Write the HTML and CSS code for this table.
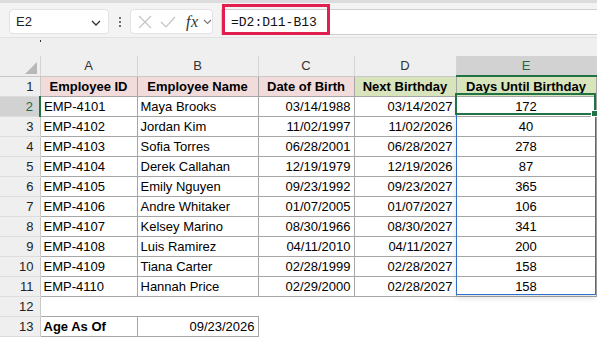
FILE: index.html
```html
<!DOCTYPE html>
<html>
<head>
<meta charset="utf-8">
<link rel="stylesheet" href="styles.css">
</head>
<body>
<div class="topstrip"></div>
<div class="fbar">
  <div class="namebox"><span class="nb-text">E2</span>
    <svg class="chev" width="10" height="6" viewBox="0 0 10 6"><path d="M1 1 L5 5 L9 1" fill="none" stroke="#333" stroke-width="1.3"/></svg>
  </div>
  <div class="dots"><span></span><span></span><span></span></div>
  <div class="fxbox">
    <svg width="14" height="14" viewBox="0 0 14 14"><path d="M1 1 L13 13 M13 1 L1 13" stroke="#c4c4c4" stroke-width="1.2"/></svg>
    <svg width="16" height="14" viewBox="0 0 16 14"><path d="M1 7 L6 12 L15 2" fill="none" stroke="#c4c4c4" stroke-width="1.2"/></svg>
    <span class="fx">fx</span>
    <svg width="9" height="6" viewBox="0 0 9 6"><path d="M1 1 L4.5 4.5 L8 1" fill="none" stroke="#777" stroke-width="1.1"/></svg>
  </div>
  <div class="finput"><span class="ftext">=D2:D11-B13</span></div>
  <div class="redbox"></div>
</div>
<div class="band"><span class="tick"></span></div>
<div class="gridwrap">
<table class="grid">
  <colgroup><col class="c0"><col class="ca"><col class="cb"><col class="cc"><col class="cd"><col class="ce"><col></colgroup>
  <tr class="colhead">
    <th class="corner"><svg width="12" height="12" viewBox="0 0 12 12"><path d="M12 0 L12 12 L0 12 Z" fill="#b8b8b8"/></svg></th>
    <th>A</th><th>B</th><th>C</th><th>D</th><th class="selcol">E</th><th class="fill"></th>
  </tr>
  <tr>
    <th class="rh">1</th>
    <td class="h pink">Employee ID</td><td class="h pink">Employee Name</td><td class="h pink">Date of Birth</td><td class="h green">Next Birthday</td><td class="h green">Days Until Birthday</td><td class="blank"></td>
  </tr>
  <tr><th class="rh selrow">2</th><td class="b">EMP-4101</td><td class="b">Maya Brooks</td><td class="b r">03/14/1988</td><td class="b r">03/14/2027</td><td class="b c">172</td><td class="blank"></td></tr>
  <tr><th class="rh">3</th><td class="b">EMP-4102</td><td class="b">Jordan Kim</td><td class="b r">11/02/1997</td><td class="b r">11/02/2026</td><td class="b c">40</td><td class="blank"></td></tr>
  <tr><th class="rh">4</th><td class="b">EMP-4103</td><td class="b">Sofia Torres</td><td class="b r">06/28/2001</td><td class="b r">06/28/2027</td><td class="b c">278</td><td class="blank"></td></tr>
  <tr><th class="rh">5</th><td class="b">EMP-4104</td><td class="b">Derek Callahan</td><td class="b r">12/19/1979</td><td class="b r">12/19/2026</td><td class="b c">87</td><td class="blank"></td></tr>
  <tr><th class="rh">6</th><td class="b">EMP-4105</td><td class="b">Emily Nguyen</td><td class="b r">09/23/1992</td><td class="b r">09/23/2027</td><td class="b c">365</td><td class="blank"></td></tr>
  <tr><th class="rh">7</th><td class="b">EMP-4106</td><td class="b">Andre Whitaker</td><td class="b r">01/07/2005</td><td class="b r">01/07/2027</td><td class="b c">106</td><td class="blank"></td></tr>
  <tr><th class="rh">8</th><td class="b">EMP-4107</td><td class="b">Kelsey Marino</td><td class="b r">08/30/1966</td><td class="b r">08/30/2027</td><td class="b c">341</td><td class="blank"></td></tr>
  <tr><th class="rh">9</th><td class="b">EMP-4108</td><td class="b">Luis Ramirez</td><td class="b r">04/11/2010</td><td class="b r">04/11/2027</td><td class="b c">200</td><td class="blank"></td></tr>
  <tr><th class="rh">10</th><td class="b">EMP-4109</td><td class="b">Tiana Carter</td><td class="b r">02/28/1999</td><td class="b r">02/28/2027</td><td class="b c">158</td><td class="blank"></td></tr>
  <tr><th class="rh">11</th><td class="b">EMP-4110</td><td class="b">Hannah Price</td><td class="b r">02/29/2000</td><td class="b r">02/28/2027</td><td class="b c">158</td><td class="blank"></td></tr>
  <tr><th class="rh">12</th><td class="blank"></td><td class="blank"></td><td class="blank"></td><td class="blank"></td><td class="blank"></td><td class="blank"></td></tr>
  <tr><th class="rh">13</th><td class="b bold">Age As Of</td><td class="b r">09/23/2026</td><td class="blank"></td><td class="blank"></td><td class="blank"></td><td class="blank"></td></tr>
  <tr><th class="rh"></th><td class="blank"></td><td class="blank"></td><td class="blank"></td><td class="blank"></td><td class="blank"></td><td class="blank"></td></tr>
</table>
<div class="spill"></div>
<div class="active"><span class="handle"></span></div>
</div>
</body>
</html>
```
FILE: styles.css
```css
html, body { margin: 0; padding: 0; }
body {
  width: 597px; height: 337px; overflow: hidden;
  background: #f0f0f0;
  font-family: "Liberation Sans", Arial, sans-serif;
  color: #000;
}
.topstrip { height: 3px; background: #dcdcdc; }
.fbar {
  position: relative;
  height: 35px;
  display: flex;
  align-items: flex-start;
  padding-top: 6px;
  box-sizing: border-box;
  background: #f3f3f3;
  border-bottom: 1px solid #e2e2e2;
}
.namebox {
  margin-left: 9px;
  width: 100px; height: 25px; box-sizing: border-box;
  background: #fff; border: 1px solid #e3e3e3; border-radius: 4px;
  display: flex; align-items: center; justify-content: space-between;
  padding: 0 7px 0 6px;
  font-size: 13px; color: #222;
}
.chev { margin-top: 2px; }
.dots {
  width: 21px; height: 25px;
  display: flex; flex-direction: column; align-items: center; justify-content: center; gap: 2px;
}
.dots span { width: 2px; height: 2px; background: #444; border-radius: 1px; }
.fxbox {
  width: 83px; height: 25px; box-sizing: border-box;
  background: #fff; border: 1px solid #e3e3e3; border-radius: 4px;
  display: flex; align-items: center; gap: 8px;
  padding-left: 7px;
}
.fx {
  font-family: "Liberation Serif", "Times New Roman", serif;
  font-style: italic; font-size: 16px; color: #333; margin-left: 2px; margin-right: -4px;
  letter-spacing: 0.5px;
}
.finput {
  flex: 1;
  margin-left: 8px;
  height: 26px; box-sizing: border-box;
  background: #fff;
  border-top: 1px solid #cfcfcf; border-bottom: 1px solid #cfcfcf; border-left: 1px solid #cfcfcf;
  display: flex; align-items: center;
  padding-left: 9px;
}
.ftext {
  font-family: "Liberation Mono", "Courier New", monospace;
  font-size: 13px; color: #111;
}
.redbox {
  position: absolute;
  left: 222px; top: 1px;
  width: 108px; height: 31px; box-sizing: border-box;
  border: 3px solid #e2204f;
}
.band { height: 18px; background: #efefef; position: relative; }
.tick { position: absolute; left: 40px; top: 2px; width: 1px; height: 2px; background: #333; }
.gridwrap { position: relative; background: #fff; }
.grid {
  border-collapse: collapse;
  table-layout: fixed;
  width: 597px;
  font-size: 13px;
}
.c0 { width: 40px; }
.ca { width: 97px; }
.cb { width: 121px; }
.cc { width: 96px; }
.cd { width: 102px; }
.ce { width: 140px; }
.grid th, .grid td { padding: 0; white-space: nowrap; overflow: hidden; }
.colhead th {
  height: 18px; box-sizing: border-box;
  background: #efefef;
  font-weight: normal; color: #333; font-size: 13px;
  border-left: 1px solid #d4d4d4;
  border-bottom: 1px solid #c8c8c8;
  text-align: center;
}
.colhead th.corner { border-left: none; text-align: right; vertical-align: bottom; padding: 0 3px 2px 0; }
.corner svg { display: block; margin-left: auto; }
.colhead th.selcol {
  background: #d2d2d2; color: #1d6b3f;
  border-bottom: 2px solid #217346;
}
.colhead th.fill { border-left: 1px solid #d4d4d4; }
.grid tr { height: 20px; }
.rh {
  height: 20px; box-sizing: border-box;
  background: #efefef;
  font-weight: normal; color: #222; font-size: 13px;
  text-align: right; padding-right: 6px !important;
  border-bottom: 1px solid #dcdcdc;
  border-right: 1px solid #c8c8c8;
}
.rh.selrow { background: #d2d2d2; color: #1d6b3f; border-right: 2px solid #217346; }
td.b, td.h {
  border: 1px solid #a6a6a6;
  padding: 0 3px;
  height: 20px; box-sizing: border-box;
}
td.h { font-weight: bold; text-align: center; }
td.pink { background: #f2dcdb; }
td.green { background: #d8e4bc; }
td.r { text-align: right; }
td.c { text-align: center; }
td.bold { font-weight: bold; }
td.blank { background: #fff; }
.spill {
  position: absolute;
  left: 456px; top: 38px;
  width: 140px; height: 201px; box-sizing: border-box;
  border: 1px solid #2e6fc9;
  box-shadow: 0 3px 6px rgba(0,0,0,0.12);
}
.active {
  position: absolute;
  left: 455px; top: 37px;
  width: 141px; height: 22px; box-sizing: border-box;
  border: 2px solid #217346;
}
.handle {
  position: absolute; right: -4px; bottom: -4px;
  width: 5px; height: 5px; background: #217346; border: 1px solid #fff;
}
```
